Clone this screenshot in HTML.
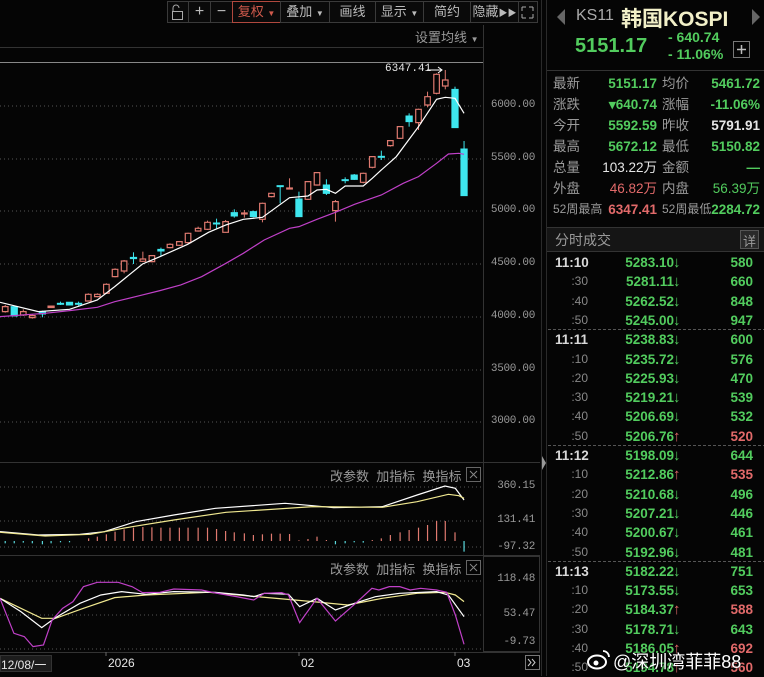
<!DOCTYPE html>
<html><head><meta charset="utf-8">
<style>
*{margin:0;padding:0;box-sizing:border-box}
body{width:764px;height:676px;background:#050505;overflow:hidden;position:relative;font-family:"Liberation Sans","Noto Sans CJK SC",sans-serif;color:#ccc}
.a{position:absolute;white-space:nowrap}
.mono{font-family:"Liberation Mono","Noto Sans CJK SC",monospace}
.ax{position:absolute;right:229px;font-family:"Liberation Mono",monospace;font-size:11px;color:#9a9a9a;letter-spacing:-0.3px}
.tb{position:absolute;top:1px;height:22px;border:1px solid #3a3a3a;font-size:13px;color:#bbb;text-align:center;line-height:20px}
.g{color:#52cc5e}.r{color:#e26a6a}.w{color:#e6e6e6}.l{color:#9a9a9a}
.row{position:absolute;left:548px;width:216px;height:21px;font-size:13.5px;line-height:21px;font-weight:bold}
.row span{position:absolute}
.t{position:absolute;left:548px;width:216px;height:19px;font-size:13.5px;line-height:19px;font-weight:bold}
.t span{position:absolute}
</style></head><body>
<svg width="764" height="676" style="position:absolute;left:0;top:0">
<line x1="0" y1="47.5" x2="483" y2="47.5" stroke="#333"/>
<line x1="0" y1="62.5" x2="483" y2="62.5" stroke="#888"/>
<line x1="483.5" y1="25" x2="483.5" y2="652" stroke="#333"/>
<line x1="0" y1="462.5" x2="540" y2="462.5" stroke="#333"/>
<line x1="0" y1="555.5" x2="540" y2="555.5" stroke="#333"/>
<line x1="0" y1="652.5" x2="540" y2="652.5" stroke="#333"/>
<rect x="483.5" y="556.5" width="56" height="95" fill="none" stroke="#333"/>
<line x1="541.5" y1="0" x2="541.5" y2="676" stroke="#2a2a2a"/>
<line x1="546.5" y1="0" x2="546.5" y2="676" stroke="#2a2a2a"/>
<path d="M542 456 L546 463 L542 470Z" fill="#999"/>
<g stroke="#555" stroke-dasharray="1 3">
<line x1="0" y1="106" x2="483" y2="106"/><line x1="0" y1="159" x2="483" y2="159"/>
<line x1="0" y1="211" x2="483" y2="211"/><line x1="0" y1="264" x2="483" y2="264"/>
<line x1="0" y1="317" x2="483" y2="317"/><line x1="0" y1="370" x2="483" y2="370"/>
<line x1="0" y1="422" x2="483" y2="422"/>
<line x1="0" y1="487" x2="483" y2="487"/><line x1="0" y1="521" x2="483" y2="521"/><line x1="0" y1="547" x2="483" y2="547"/>
<line x1="0" y1="581" x2="483" y2="581"/><line x1="0" y1="615" x2="483" y2="615"/><line x1="0" y1="649" x2="483" y2="649"/>
</g>
<g id="main" transform="translate(0,60) scale(0.3476,0.3333)"></g>
<g id="macd" transform="translate(0,455) scale(0.3476,0.3333)"></g>
<g id="kdj" transform="translate(0,455) scale(0.3476,0.3333)"></g>
<rect x="466.5" y="467.5" width="14" height="14" fill="none" stroke="#666"/>
<path d="M470 471l7 7M477 471l-7 7" stroke="#888"/>
<rect x="466.5" y="560.5" width="14" height="14" fill="none" stroke="#666"/>
<path d="M470 564l7 7M477 564l-7 7" stroke="#888"/>
<rect x="0.5" y="655.5" width="51" height="16" fill="#1c1c1c" stroke="#333"/>
<rect x="525.5" y="655.5" width="14" height="14" fill="none" stroke="#777"/>
<path d="M528 659l3 3.5-3 3.5M532 659l3 3.5-3 3.5" stroke="#ccc" fill="none"/>
<line x1="106" y1="652" x2="106" y2="656" stroke="#666"/><line x1="299" y1="652" x2="299" y2="656" stroke="#666"/><line x1="455" y1="652" x2="455" y2="656" stroke="#666"/>
<path d="M427 70 L442 70 M438 67 L442 70 L438 73" stroke="#fff" fill="none"/>
<line x1="547" y1="70.5" x2="764" y2="70.5" stroke="#333"/>
<line x1="547" y1="227.5" x2="764" y2="227.5" stroke="#333"/>
<rect x="547" y="228" width="217" height="23" fill="#151515"/>
<line x1="547" y1="251.5" x2="764" y2="251.5" stroke="#333"/>
<g stroke="#555" stroke-dasharray="3 2"><line x1="548" y1="329.5" x2="764" y2="329.5"/><line x1="548" y1="445.5" x2="764" y2="445.5"/><line x1="548" y1="561.5" x2="764" y2="561.5"/></g>
<path d="M565 9 L557 17 L565 25Z" fill="#666"/><path d="M752 9 L760 17 L752 25Z" fill="#666"/>
<rect x="733.5" y="41.5" width="16" height="16" fill="none" stroke="#777"/>
<path d="M737 49.5h9M741.5 45v9" stroke="#bbb" stroke-width="1.5"/>
<rect x="740.5" y="230.5" width="18" height="18" fill="#2a2a2a" stroke="#555"/>
<rect x="167" y="1" width="371" height="22" fill="#0a0a0a"/>
<path d="M173 11 v-3 a3 3 0 0 1 6 0" stroke="#aaa" fill="none"/><rect x="172.5" y="11.5" width="10" height="8" fill="none" stroke="#aaa"/>
<path d="M522 7h4M522 7v4M533 7h-4M533 7v4M522 18h4M522 18v-4M533 18h-4M533 18v-4" stroke="#aaa" fill="none"/>
<ellipse cx="597" cy="662" rx="9" ry="6.5" fill="none" stroke="#fff" stroke-width="2"/>
<circle cx="596" cy="663" r="2.5" fill="#fff"/>
<path d="M603 651a6 6 0 0 1 6 6" stroke="#fff" stroke-width="1.8" fill="none"/>
</svg>

<div class="tb" style="left:167px;width:22px"></div>
<div class="tb" style="left:188px;width:23px;font-size:16px">+</div>
<div class="tb" style="left:210px;width:23px;font-size:16px">−</div>
<div class="tb" style="left:232px;width:49px;border-color:#b0483e;color:#d05a4c">复权 <span style="font-size:8px">▼</span></div>
<div class="tb" style="left:280px;width:50px">叠加 <span style="font-size:8px">▼</span></div>
<div class="tb" style="left:329px;width:47px">画线</div>
<div class="tb" style="left:375px;width:49px">显示 <span style="font-size:8px">▼</span></div>
<div class="tb" style="left:423px;width:48px">简约</div>
<div class="tb" style="left:470px;width:49px">隐藏<span style="font-size:9px">▶▶</span></div>
<div class="tb" style="left:518px;width:20px"></div>
<div class="a l" style="left:415px;top:27px;font-size:13px">设置均线 <span style="font-size:8px">▼</span></div>
<div class="a w mono" style="left:385px;top:63px;font-size:11px">6347.41</div>

<div class="ax" style="top:99px">6000.00</div>
<div class="ax" style="top:152px">5500.00</div>
<div class="ax" style="top:204px">5000.00</div>
<div class="ax" style="top:257px">4500.00</div>
<div class="ax" style="top:310px">4000.00</div>
<div class="ax" style="top:363px">3500.00</div>
<div class="ax" style="top:415px">3000.00</div>
<div class="a l" style="left:330px;top:466px;font-size:13px">改参数&nbsp; 加指标&nbsp; 换指标</div>
<div class="a l" style="left:330px;top:559px;font-size:13px">改参数&nbsp; 加指标&nbsp; 换指标</div>
<div class="ax" style="top:480px">360.15</div>
<div class="ax" style="top:514px">131.41</div>
<div class="ax" style="top:541px">-97.32</div>
<div class="ax" style="top:573px">118.48</div>
<div class="ax" style="top:608px">53.47</div>
<div class="ax" style="top:636px">-9.73</div>
<div class="a w" style="left:1px;top:656px;font-size:12px">12/08/一</div>
<div class="a w" style="left:108px;top:656px;font-size:12px">2026</div>
<div class="a w" style="left:301px;top:656px;font-size:12px">02</div>
<div class="a w" style="left:457px;top:656px;font-size:12px">03</div>

<div class="a" style="left:576px;top:7px;font-size:16px;color:#aaa">KS11</div>
<div class="a" style="left:621px;top:3px;font-size:21px;font-weight:bold;color:#f2f0c8">韩国KOSPI</div>
<div class="a g" style="left:575px;top:35px;font-size:20px;font-weight:bold">5151.17</div>
<div class="a g" style="left:668px;top:29px;font-size:14px;font-weight:bold">- 640.74</div>
<div class="a g" style="left:668px;top:46px;font-size:14px;font-weight:bold">- 11.06%</div>

<div class="row" style="top:73px"><span class="l" style="left:5px;font-weight:normal">最新</span><span class="g" style="right:107px">5151.17</span><span class="l" style="left:114px;font-weight:normal">均价</span><span class="g" style="right:4px">5461.72</span></div>
<div class="row" style="top:94px"><span class="l" style="left:5px;font-weight:normal">涨跌</span><span class="g" style="right:107px">▾640.74</span><span class="l" style="left:114px;font-weight:normal">涨幅</span><span class="g" style="right:4px">-11.06%</span></div>
<div class="row" style="top:115px"><span class="l" style="left:5px;font-weight:normal">今开</span><span class="g" style="right:107px">5592.59</span><span class="l" style="left:114px;font-weight:normal">昨收</span><span class="w" style="right:4px">5791.91</span></div>
<div class="row" style="top:136px"><span class="l" style="left:5px;font-weight:normal">最高</span><span class="g" style="right:107px">5672.12</span><span class="l" style="left:114px;font-weight:normal">最低</span><span class="g" style="right:4px">5150.82</span></div>
<div class="row" style="top:157px"><span class="l" style="left:5px;font-weight:normal">总量</span><span class="w" style="right:107px;font-weight:normal">103.22万</span><span class="l" style="left:114px;font-weight:normal">金额</span><span class="g" style="right:4px">—</span></div>
<div class="row" style="top:178px"><span class="l" style="left:5px;font-weight:normal">外盘</span><span class="r" style="right:107px;font-weight:normal">46.82万</span><span class="l" style="left:114px;font-weight:normal">内盘</span><span class="g" style="right:4px;font-weight:normal">56.39万</span></div>
<div class="row" style="top:199px;font-size:12px"><span class="l" style="left:5px;font-weight:normal">52周最高</span><span class="r" style="right:107px;font-size:13.5px">6347.41</span><span class="l" style="left:114px;font-weight:normal">52周最低</span><span class="g" style="right:4px;font-size:13.5px">2284.72</span></div>
<div class="a l" style="left:555px;top:230px;font-size:14px">分时成交</div>
<div class="a l" style="left:743px;top:231px;font-size:13px">详</div>

<div id="ticks"></div>
<div class="a" style="left:613px;top:648px;font-size:18px;color:#fff;text-shadow:0 0 2px #000">@深圳湾菲菲88</div>

<script>
var NS="http://www.w3.org/2000/svg";
function el(p,t,a){var e=document.createElementNS(NS,t);for(var k in a)e.setAttribute(k,a[k]);e.setAttribute("vector-effect","non-scaling-stroke");p.appendChild(e);return e;}
function pl(p,pts,c,w){el(p,"polyline",{points:pts.map(function(q){return q.join(",")}).join(" "),fill:"none",stroke:c,"stroke-width":w||1});}
var R="#e07a70",C="#3ee6ee";
var m=document.getElementById("main");
var cs=[[15,740,755,735,758,"r"],[41,740,768,738,768,"c"],[67,755,765,748,768,"r"],[93,767,773,762,776,"r"],[122,755,762,752,772,"c"],[147,738,743,738,743,"R"],[174,730,731,725,735,"c"],[200,727,735,727,735,"c"],[226,730,731,725,737,"c"],[254,703,723,700,723,"r"],[280,703,710,700,712,"r"],[306,673,700,670,702,"r"],[331,628,650,625,652,"r"],[357,603,633,600,640,"r"],[384,592,596,577,612,"c"],[411,597,604,575,606,"r"],[437,587,605,585,607,"r"],[463,568,573,563,590,"c"],[489,553,563,550,565,"r"],[516,545,556,543,558,"r"],[541,520,548,518,550,"r"],[570,505,513,500,515,"r"],[597,487,508,482,510,"r"],[623,489,491,476,505,"c"],[649,485,517,480,518,"r"],[674,458,468,448,473,"c"],[703,459,461,450,473,"r"],[729,455,470,452,472,"c"],[755,430,478,428,487,"r"],[781,400,410,398,412,"r"],[806,377,379,377,430,"c"],[833,384,386,355,386,"r"],[860,417,470,395,470,"c"],[886,365,418,363,420,"r"],[912,338,375,336,377,"r"],[939,375,400,358,405,"c"],[965,425,452,420,485,"r"],[993,359,361,352,370,"c"],[1019,345,358,342,360,"c"],[1045,340,367,338,370,"r"],[1071,290,322,288,325,"r"],[1097,289,291,272,300,"c"],[1123,242,257,240,260,"r"],[1151,200,235,198,237,"r"],[1177,168,185,160,200,"c"],[1204,148,188,146,210,"r"],[1230,110,135,95,142,"r"],[1256,43,100,40,103,"r"],[1281,60,78,30,88,"r"],[1309,88,203,80,203,"c"],[1335,267,407,243,407,"c"]];
cs.forEach(function(c){var col=c[5]=="c"?C:R;el(m,"line",{x1:c[0],y1:c[3],x2:c[0],y2:c[4],stroke:col});var h=Math.max(c[2]-c[1],3);
 if(c[5]=="c"||c[5]=="R")el(m,"rect",{x:c[0]-9,y:c[1],width:18,height:h,fill:col,stroke:col});else el(m,"rect",{x:c[0]-8,y:c[1],width:16,height:h,fill:"#050505",stroke:col,"stroke-width":1.2});});
pl(m,[[0,727],[110,755],[200,748],[280,720],[330,680],[410,612],[460,590],[540,553],[600,517],[650,495],[700,478],[755,472],[833,413],[886,408],[912,390],[939,388],[965,400],[993,378],[1045,378],[1071,355],[1097,330],[1140,290],[1204,200],[1256,118],[1281,112],[1309,115],[1335,160]],"#fff",1.2);
pl(m,[[0,770],[130,760],[200,752],[280,742],[330,725],[410,705],[460,692],[520,675],[580,650],[650,610],[700,580],[760,540],[833,505],[860,500],[912,478],[965,457],[1020,433],[1097,405],[1160,370],[1204,350],[1256,310],[1290,282],[1320,280],[1335,283]],"#c040c8",1.2);
var md=document.getElementById("macd");
var bs=[[15,265],[41,265],[67,263],[93,265],[122,268],[147,265],[174,262],[200,262],[255,250],[280,245],[306,238],[331,230],[357,223],[384,218],[411,216],[437,217],[463,218],[489,218],[516,218],[541,218],[570,218],[597,218],[623,222],[649,228],[674,232],[703,235],[729,240],[755,238],[781,236],[806,236],[833,237],[860,256],[886,252],[912,245],[939,255],[965,268],[993,265],[1019,262],[1045,263],[1071,255],[1097,250],[1123,240],[1151,232],[1177,225],[1204,218],[1230,210],[1256,198],[1281,198],[1309,232],[1335,290]];
bs.forEach(function(b){var cy=b[1]>258;var col=(cy||b[0]<210||(b[0]>960&&b[0]<1050))?"#5ad8dc":"#e07a70";el(md,"line",{x1:b[0],y1:258,x2:b[0],y2:b[1],stroke:col,"stroke-width":1.2});});
pl(md,[[0,230],[110,240],[230,238],[300,230],[390,200],[500,180],[620,160],[820,145],[900,152],[960,158],[1100,155],[1200,120],[1280,93],[1310,100],[1335,135]],"#fff",1.2);
pl(md,[[0,232],[130,243],[260,238],[380,215],[500,195],[650,172],[900,155],[1100,157],[1200,140],[1290,118],[1320,122],[1335,130]],"#f0e890",1.2);
var k=document.getElementById("kdj");
pl(k,[[0,430],[120,490],[160,490],[240,460],[330,428],[420,420],[600,412],[900,440],[1000,450],[1100,430],[1200,415],[1280,412],[1310,420],[1335,440]],"#f0e890",1.2);
pl(k,[[0,430],[60,470],[120,518],[160,488],[230,445],[290,420],[350,410],[420,418],[500,410],[620,412],[700,420],[730,425],[760,415],[830,418],[862,455],[912,430],[965,465],[1020,445],[1080,425],[1150,415],[1256,410],[1290,420],[1335,485]],"#fff",1.2);
pl(k,[[0,430],[40,535],[70,545],[95,575],[125,570],[150,495],[180,460],[210,440],[240,395],[280,382],[340,382],[380,395],[410,413],[460,412],[500,402],[580,405],[620,414],[680,425],[730,435],[760,415],[810,413],[830,420],[862,503],[912,430],[965,498],[1020,448],[1070,400],[1090,405],[1120,395],[1150,395],[1180,405],[1210,400],[1256,405],[1285,412],[1310,480],[1335,568]],"#c040c8",1.2);
var T=[["11:10","5283.10",0,"580"],[":30","5281.11",0,"660"],[":40","5262.52",0,"848"],[":50","5245.00",0,"947"],["11:11","5238.83",0,"600"],[":10","5235.72",0,"576"],[":20","5225.93",0,"470"],[":30","5219.21",0,"539"],[":40","5206.69",0,"532"],[":50","5206.76",1,"520"],["11:12","5198.09",0,"644"],[":10","5212.86",1,"535"],[":20","5210.68",0,"496"],[":30","5207.21",0,"446"],[":40","5200.67",0,"461"],[":50","5192.96",0,"481"],["11:13","5182.22",0,"751"],[":10","5173.55",0,"653"],[":20","5184.37",1,"588"],[":30","5178.71",0,"643"],[":40","5186.05",1,"692"],[":50","5194.78",1,"560"]];
var h="";T.forEach(function(t,i){var y=253+i*19.3;var big=t[0].length>3;
h+='<div class="t" style="top:'+y+'px"><span style="'+(big?'left:7px;color:#d8d8d8':'right:176px;color:#888;font-weight:normal;font-size:12px')+'">'+t[0]+'</span><span class="g" style="right:90px">'+t[1]+'</span><span class="'+(t[2]?'r':'g')+'" style="left:125px;font-size:15px">'+(t[2]?'↑':'↓')+'</span><span class="'+(t[2]?'r':'g')+'" style="right:11px">'+t[3]+'</span></div>';});
document.getElementById("ticks").innerHTML=h;
</script>
</body></html>
